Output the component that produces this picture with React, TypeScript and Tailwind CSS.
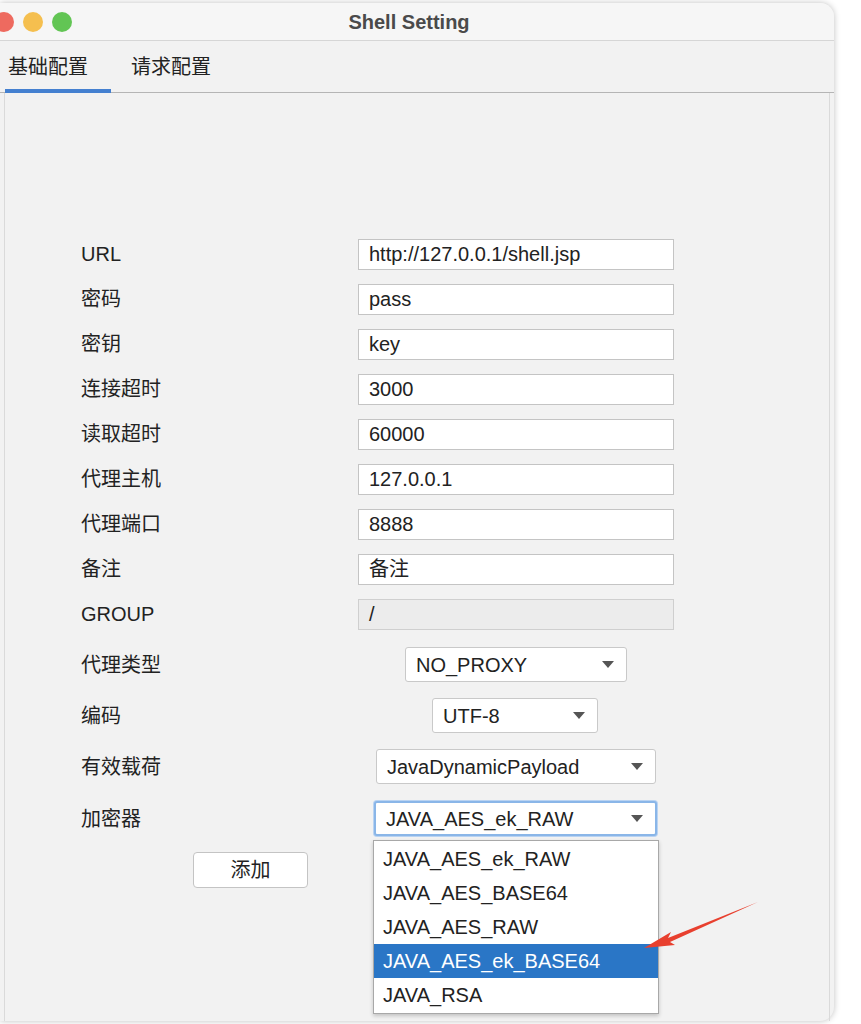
import React from "react";

const font = { fontFamily: '"Liberation Sans", "Noto Sans CJK SC", sans-serif' };

const fields: [string, string, boolean?][] = [
  ["URL", "http://127.0.0.1/shell.jsp"],
  ["密码", "pass"],
  ["密钥", "key"],
  ["连接超时", "3000"],
  ["读取超时", "60000"],
  ["代理主机", "127.0.0.1"],
  ["代理端口", "8888"],
  ["备注", "备注"],
  ["GROUP", "/", true],
];

const Arrow = () => (
  <svg width="12" height="7" viewBox="0 0 12 7" className="ml-auto">
    <path d="M0 0 L12 0 L6 7 Z" fill="#555" />
  </svg>
);

const Combo = ({ value, width, focus }: { value: string; width: string; focus?: boolean }) => (
  <div
    className={`${width} h-[35px] flex items-center px-[10px] pr-[12px] bg-white rounded-[3px] text-[20px] text-[#222] ${
      focus ? "border-2 border-[#8ab6e8] shadow-[0_0_0_1px_#b9d3f2]" : "border border-[#c9c9c9]"
    }`}
  >
    <span>{value}</span>
    <Arrow />
  </div>
);

export default function App() {
  const items = ["JAVA_AES_ek_RAW", "JAVA_AES_BASE64", "JAVA_AES_RAW", "JAVA_AES_ek_BASE64", "JAVA_RSA"];
  return (
    <div className="w-[861px] h-[1024px] bg-white relative overflow-hidden" style={font}>
      <div className="absolute left-0 top-[3px] w-[834px] h-[1018px] bg-[#f2f2f2] rounded-r-[14px] shadow-[0_0_6px_rgba(0,0,0,0.25)] flex flex-col">
        {/* title bar */}
        <div className="h-[38px] flex items-center relative border-b border-[#d6d6d6] bg-[#f6f6f6] rounded-tr-[14px]">
          <div className="flex gap-[9px] ml-[-6px]">
            <span className="w-[20px] h-[20px] rounded-full bg-[#ee6a5f]" />
            <span className="w-[20px] h-[20px] rounded-full bg-[#f5bf4f]" />
            <span className="w-[20px] h-[20px] rounded-full bg-[#62c554]" />
          </div>
          <div className="absolute inset-0 flex items-center justify-center pr-[16px] text-[20px] font-bold text-[#4a4a4a]">
            Shell Setting
          </div>
        </div>
        {/* tabs */}
        <div className="h-[52px] flex items-end border-b border-[#b5b5b5] relative">
          <div className="w-[111px] h-full flex items-center pl-[8px] text-[20px] text-[#222] relative">
            基础配置
            <span className="absolute left-[5px] right-0 bottom-[-1px] h-[4px] bg-[#4480d0]" />
          </div>
          <div className="h-full flex items-center pl-[20px] text-[20px] text-[#222]">请求配置</div>
        </div>
        <div className="mx-[4px] flex-1 border-l border-r border-[#dadada] pt-[146px] relative">
          <div className="flex flex-col gap-[15px]">
            {fields.map(([label, val, dis]) => (
              <div key={label} className="flex items-center h-[30px]">
                <div className="w-[353px] pl-[76px] text-[20px] text-[#222]">{label}</div>
                <div
                  className={`w-[316px] h-[31px] flex items-center px-[10px] text-[20px] text-[#222] border ${
                    dis ? "bg-[#ececec] border-[#cfcfcf]" : "bg-white border-[#c4c4c4]"
                  }`}
                >
                  {val}
                </div>
              </div>
            ))}
          </div>
          <div className="flex flex-col mt-[18px] gap-[16px]">
            <div className="flex items-center h-[35px]">
              <div className="w-[400px] pl-[76px] text-[20px] text-[#222]">代理类型</div>
              <Combo value="NO_PROXY" width="w-[222px]" />
            </div>
            <div className="flex items-center h-[35px]">
              <div className="w-[427px] pl-[76px] text-[20px] text-[#222]">编码</div>
              <Combo value="UTF-8" width="w-[166px]" />
            </div>
            <div className="flex items-center h-[35px]">
              <div className="w-[371px] pl-[76px] text-[20px] text-[#222]">有效载荷</div>
              <Combo value="JavaDynamicPayload" width="w-[280px]" />
            </div>
            <div className="flex items-center h-[37px]">
              <div className="w-[369px] pl-[76px] text-[20px] text-[#222]">加密器</div>
              <Combo value="JAVA_AES_ek_RAW" width="w-[283px]" focus />
            </div>
          </div>
          <div className="mt-[15px] ml-[188px] w-[115px] h-[36px] bg-white border border-[#c4c4c4] rounded-[4px] flex items-center justify-center text-[20px] text-[#222]">
            添加
          </div>
          {/* dropdown list */}
          <div className="absolute left-[368px] top-[747px] w-[286px] bg-white border border-[#a8a8a8] shadow-[0_2px_4px_rgba(0,0,0,0.2)] py-[1px]">
            {items.map((it, i) => (
              <div
                key={it}
                className={`h-[34px] flex items-center pl-[9px] text-[20px] ${
                  i === 3 ? "bg-[#2a76c6] text-white" : "text-[#222]"
                }`}
              >
                {it}
              </div>
            ))}
          </div>
        </div>
      </div>
      {/* annotation arrow */}
      <svg className="absolute left-[640px] top-[898px]" width="125" height="56" viewBox="0 0 125 56">
        <path d="M118 4 L28 40 L31 34 L4 50 L35 47 L30 44 Z" fill="#e8402f" />
      </svg>
    </div>
  );
}
